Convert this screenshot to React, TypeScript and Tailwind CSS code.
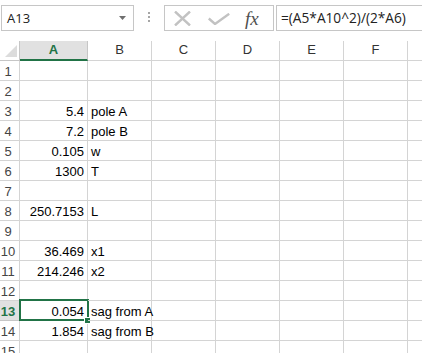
import React from 'react';

const cols = ['A', 'B', 'C', 'D', 'E', 'F', ''];
const colWidths = ['w-[68px]', 'w-[64px]', 'w-[64px]', 'w-[64px]', 'w-[64px]', 'w-[64px]', 'w-[64px]'];

const data: Record<number, [string, string]> = {
  3: ['5.4', 'pole A'],
  4: ['7.2', 'pole B'],
  5: ['0.105', 'w'],
  6: ['1300', 'T'],
  8: ['250.7153', 'L'],
  10: ['36.469', 'x1'],
  11: ['214.246', 'x2'],
  13: ['0.054', 'sag from A'],
  14: ['1.854', 'sag from B'],
};

const cellFont = { fontFamily: '"Liberation Sans", Arial, sans-serif' };
const uiFont = { fontFamily: '"Open Sans", "Noto Sans", sans-serif' };

function Toolbar() {
  return (
    <div className="relative flex h-[41px] shrink-0 items-start pt-[5px] bg-white" style={uiFont}>
      {/* Name box */}
      <div className="ml-[1px] flex h-[26px] w-[133px] items-center justify-between border border-[#c6c6c6] pl-[5px] pr-[7px]">
        <span className="text-[13px] leading-none text-[#222]">A13</span>
        <svg width="7" height="4" viewBox="0 0 7 4">
          <path d="M0 0h7L3.5 4z" fill="#6f6f6f" />
        </svg>
      </div>
      {/* Grip dots */}
      <div className="ml-[14px] mt-[7px] flex w-[2px] flex-col gap-[2px]">
        <div className="h-[2px] w-[2px] bg-[#a6a6a6]" />
        <div className="h-[2px] w-[2px] bg-[#a6a6a6]" />
        <div className="h-[2px] w-[2px] bg-[#a6a6a6]" />
      </div>
      {/* Cancel / enter / fx */}
      <div className="ml-[14px] flex h-[26px] w-[110px] items-center border border-[#c6c6c6]">
        <svg className="ml-[9px]" width="17" height="15" viewBox="0 0 17 15">
          <path d="M1 0.5L16 14.5M16 0.5L1 14.5" stroke="#c2c2c2" strokeWidth="2.4" />
        </svg>
        <svg className="ml-[17px] mt-[2px]" width="22" height="12" viewBox="0 0 22 12">
          <path d="M0.8 5.5L7 11L21.2 0.8" stroke="#c2c2c2" strokeWidth="2.4" fill="none" />
        </svg>
        <span
          className="ml-[15px] text-[19px] italic leading-none text-[#505050]"
          style={{ fontFamily: '"Liberation Serif", "Times New Roman", serif' }}
        >
          fx
        </span>
      </div>
      {/* Formula bar */}
      <div className="ml-[2px] flex h-[26px] flex-1 items-center border border-r-0 border-[#c6c6c6] pl-[4px]">
        <span className="text-[13.7px] leading-none text-[#222] whitespace-nowrap">=(A5*A10^2)/(2*A6)</span>
      </div>
    </div>
  );
}

function HeaderRow() {
  return (
    <div className="flex h-[20px] shrink-0" style={cellFont}>
      <div className="relative w-[20px] shrink-0 border-r border-b border-[#c6c6c6]">
        <svg className="absolute left-[5px] top-[4px]" width="12" height="12" viewBox="0 0 12 12">
          <path d="M12 0V12H0z" fill="#dcdcdc" />
        </svg>
      </div>
      {cols.map((c, i) => (
        <div
          key={i}
          className={`${colWidths[i]} shrink-0 text-center text-[13px] leading-[18px] ${
            c === 'A'
              ? 'bg-[#e1e1e1] border-b-2 border-b-[#217346] border-r border-r-[#c6c6c6] text-[#217346] font-bold'
              : 'border-b border-r border-[#d4d4d4] text-[#333]'
          }`}
        >
          {c}
        </div>
      ))}
    </div>
  );
}

function Row({ n }: { n: number }) {
  const d = data[n];
  const sel = n === 13;
  return (
    <div className="flex h-[20px] shrink-0" style={cellFont}>
      <div
        className={`w-[20px] shrink-0 border-r border-b pr-[3px] text-center text-[13px] leading-[20px] pt-[1px] ${
          sel ? 'bg-[#e1e1e1] border-[#c6c6c6] text-[#217346] font-bold' : 'border-[#d4d4d4] text-[#444]'
        }`}
      >
        {n}
      </div>
      {cols.map((c, i) => (
        <div
          key={i}
          className={`${colWidths[i]} shrink-0 border-r border-b border-[#d4d4d4] text-[13px] leading-[20px] pt-[1px] text-black whitespace-nowrap ${
            i === 0 ? 'text-right pr-[3px] overflow-hidden' : 'pl-[3px]'
          } ${i === 1 ? 'relative z-10 overflow-visible' : 'overflow-hidden'}`}
        >
          {d && i === 0 ? d[0] : null}
          {d && i === 1 ? d[1] : null}
        </div>
      ))}
    </div>
  );
}

export default function App() {
  const rows = Array.from({ length: 15 }, (_, i) => i + 1);
  return (
    <div className="relative h-[353px] w-[422px] overflow-hidden bg-white">
      <Toolbar />
      <HeaderRow />
      {rows.map((n) => (
        <Row key={n} n={n} />
      ))}
      {/* Active cell A13 */}
      <div className="absolute left-[19px] top-[299px] h-[22px] w-[70px] border-2 border-[#217346] pointer-events-none" />
      <div className="absolute left-[84px] top-[317px] h-[7px] w-[7px] border border-white bg-[#217346]" />
    </div>
  );
}
